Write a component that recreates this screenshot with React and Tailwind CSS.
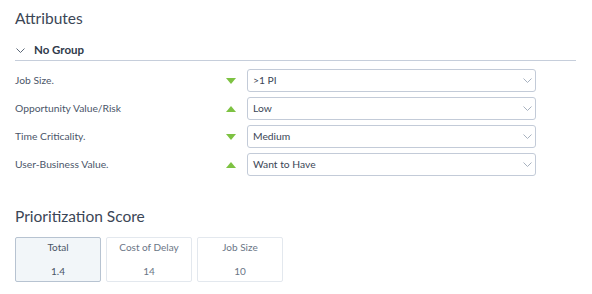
import React from 'react';

const rows = [
  { label: 'Job Size.', value: '>1 PI', dir: 'down' },
  { label: 'Opportunity Value/Risk', value: 'Low', dir: 'up' },
  { label: 'Time Criticality.', value: 'Medium', dir: 'down' },
  { label: 'User-Business Value.', value: 'Want to Have', dir: 'up' },
];

const scores = [
  { label: 'Total', value: '1.4', active: true },
  { label: 'Cost of Delay', value: '14' },
  { label: 'Job Size', value: '10' },
];

const Triangle = ({ dir }) => (
  <svg width="10" height="6" viewBox="0 0 10 6" className="block ml-[1px]">
    {dir === 'down' ? (
      <path d="M0 0 H10 L5 6 Z" fill="#7dc242" />
    ) : (
      <path d="M0 6 H10 L5 0 Z" fill="#7dc242" />
    )}
  </svg>
);

const Chevron = ({ className }) => (
  <svg width="9" height="5" viewBox="0 0 9 5" className={className}>
    <path d="M0.5 0.5 L4.5 4.5 L8.5 0.5" fill="none" stroke="currentColor" strokeWidth="1" />
  </svg>
);

const App = () => {
  return (
    <div className="w-[592px] h-[294px] bg-white px-[15px] pt-[7px] font-['Lato',sans-serif] text-[#3b4656]">
      <h2 className="text-[15.5px] leading-[22px] text-[#3b4656]">Attributes</h2>

      <div className="mt-[13px] w-[561px] border-b border-[#c6cedb] h-[19px] flex items-start">
        <div className="flex items-center h-[14px] mt-[1px]">
          <Chevron className="text-[#5c6878] ml-[1px]" />
          <span className="ml-[9px] text-[11.5px] font-bold text-[#2f3a4a]">No Group</span>
        </div>
      </div>

      <div className="mt-[8px] flex flex-col gap-[5px]">
        {rows.map((r) => (
          <div key={r.label} className="grid grid-cols-[210px_22px_289px] items-center h-[23px]">
            <span className="text-[10.3px] text-[#4b5669]">{r.label}</span>
            <Triangle dir={r.dir} />
            <div className="h-[23px] border border-[#c3cbd8] rounded-[3px] flex items-center justify-between pl-[5px] pr-[3px]">
              <span className="text-[10.3px] text-[#3b4656]">{r.value}</span>
              <Chevron className="text-[#a7b1bf]" />
            </div>
          </div>
        ))}
      </div>

      <h2 className="mt-[29px] text-[15.5px] leading-[22px] text-[#3b4656]">Prioritization Score</h2>

      <div className="mt-[10px] flex gap-[5px]">
        {scores.map((s) => (
          <div
            key={s.label}
            className={
              s.active
                ? 'w-[86px] h-[45px] rounded-[2px] border border-[#b7c3d1] bg-[#f2f6f9] flex flex-col items-center pt-[3px] text-[10px] text-[#4a5567]'
                : 'w-[86px] h-[45px] rounded-[2px] border border-[#e3e8ee] bg-white flex flex-col items-center pt-[3px] text-[10px] text-[#6b7686]'
            }
          >
            <span className="leading-[13px]">{s.label}</span>
            <span className="leading-[13px] mt-[11px]">{s.value}</span>
          </div>
        ))}
      </div>
    </div>
  );
};

export default App;
